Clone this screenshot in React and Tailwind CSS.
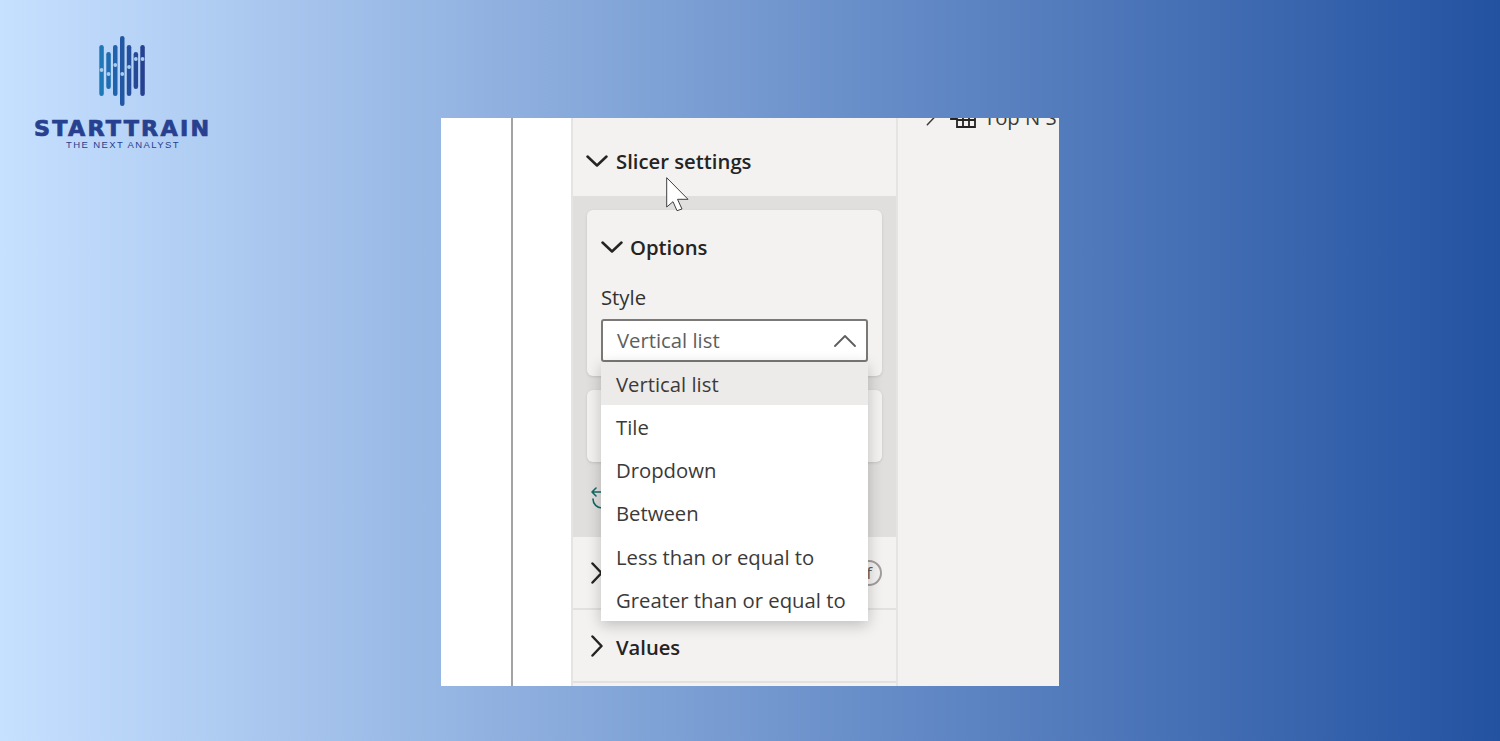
import React from "react";

const uiFont = "font-['Open_Sans','Noto_Sans',sans-serif]";

function Chevron({ dir = "down", className = "", width = 2.5 }) {
  const conf = {
    down: ["0 0 22 12", "M1.5 1.5 L11 10.5 L20.5 1.5"],
    up: ["0 0 22 12", "M1 11 L11 1 L21 11"],
    right: ["0 0 12 22", "M1.5 1.5 L10.5 11 L1.5 20.5"],
  }[dir];
  return (
    <svg viewBox={conf[0]} className={className} fill="none" stroke="currentColor" strokeWidth={width} strokeLinecap="round" strokeLinejoin="round">
      <path d={conf[1]} />
    </svg>
  );
}

function Logo() {
  const bars = [
    { x: 99.3, y: 45, h: 51, c: "#1f78b8", dot: 70 },
    { x: 106.3, y: 52, h: 37, c: "#1f6cb0", dot: 74 },
    { x: 113, y: 45, h: 51, c: "#2062ab", dot: 65 },
    { x: 120, y: 36, h: 70, c: "#2258a3", dot: 74 },
    { x: 126.8, y: 45, h: 51, c: "#244f9c", dot: 67 },
    { x: 133.6, y: 52, h: 37, c: "#264896", dot: 59 },
    { x: 140.3, y: 45, h: 51, c: "#274191", dot: 59 },
  ];
  return (
    <div className="mt-[36px] flex w-[176px] flex-col items-center">
      <svg viewBox="96 36 52 70" className="h-[70px] w-[52px]">
        {bars.map((b) => (
          <g key={b.x}>
            <rect x={b.x} y={b.y} width="4.5" height={b.h} rx="2.25" fill={b.c} />
            <circle cx={b.x + 2.25} cy={b.dot} r="1.9" fill="#a9cdf0" />
          </g>
        ))}
      </svg>
      <div className="ml-[2px] mt-[14px] origin-center scale-x-[1.06] whitespace-nowrap text-[21px] leading-[18px] font-bold tracking-[2.1px] text-[#27408f] [-webkit-text-stroke:0.7px_#27408f] font-['DejaVu_Sans',sans-serif]">
        STARTTRAIN
      </div>
      <div className="ml-[2px] mt-[2px] whitespace-nowrap text-[9.5px] leading-[10px] tracking-[1.4px] text-[#27408f] font-['Liberation_Sans',sans-serif]">
        THE NEXT ANALYST
      </div>
    </div>
  );
}

function Cursor() {
  return (
    <svg viewBox="0 0 24 35" className="absolute left-[224px] top-[59px] h-[35px] w-[24px]">
      <path d="M1.7 .7 L1.7 30 L8 24.7 L12 33.7 L17 32 L12.5 22.3 L23 22.3 Z" fill="#ffffff" stroke="#3f3f3f" strokeWidth="1" />
    </svg>
  );
}

function DropdownMenu() {
  const items = ["Vertical list", "Tile", "Dropdown", "Between", "Less than or equal to", "Greater than or equal to"];
  return (
    <div className="absolute left-[160px] top-[244px] w-[267px] bg-white shadow-[0_4px_14px_rgba(0,0,0,0.22)]">
      {items.map((t, i) => (
        <div
          key={t}
          className={`flex h-[43.2px] items-center whitespace-nowrap pl-[15px] pt-[1px] text-[20.3px] text-[#3b3a39] ${i === 0 ? "bg-[#edebe9]" : "bg-white"}`}
        >
          {t}
        </div>
      ))}
    </div>
  );
}

function Row({ label, children }) {
  return (
    <div className="flex h-[73px] items-center border-b-2 border-[#e3e1df] pl-[18px]">
      <Chevron dir="right" className="h-[22px] w-[12px] text-[#252423]" />
      <span className="ml-[13px] pt-[3px] text-[20.2px] font-semibold text-[#252423]">{label}</span>
      {children}
    </div>
  );
}

export default function App() {
  return (
    <div className="flex h-[741px] w-full items-start overflow-hidden bg-[linear-gradient(90deg,#c6e0ff_0%,#2352a1_100%)] pl-[34px]">
      <Logo />
      <div className={`relative ml-[231px] mt-[118px] flex h-[568px] w-[618px] overflow-hidden bg-white ${uiFont}`}>
        <div className="w-[70px] bg-white" />
        <div className="w-[2px] bg-[#a3a3a3]" />
        <div className="w-[58px] bg-white" />
        <div className="flex w-[327px] flex-col border-x-2 border-[#e6e4e2] bg-[#f3f2f1]">
          <div className="flex h-[78px] items-center pl-[13px] pt-[8px]">
            <Chevron dir="down" className="h-[12px] w-[22px] text-[#252423]" />
            <span className="ml-[8px] text-[20.3px] font-semibold text-[#252423]">Slicer settings</span>
          </div>
          <div className="flex h-[341px] flex-col bg-[#e1dfdd] px-[14px] pt-[14px]">
            <div className="h-[166px] rounded-[6px] bg-[#f3f2f1] px-[14px] pt-[21px] shadow-[0_1px_3px_rgba(0,0,0,0.12)]">
              <div className="flex items-center">
                <Chevron dir="down" className="h-[12px] w-[22px] text-[#252423]" />
                <span className="ml-[7px] text-[20.3px] font-semibold leading-[32px] text-[#252423]">Options</span>
              </div>
              <div className="mt-[20px] text-[20.3px] leading-[28px] text-[#323130]">Style</div>
              <div className="mt-[8px] flex h-[43px] items-center justify-between rounded-[3px] border-2 border-[#7b7977] bg-white pl-[14px] pr-[10px]">
                <span className="text-[20.3px] text-[#605e5c]">Vertical list</span>
                <Chevron dir="up" width={1.8} className="h-[12px] w-[22px] text-[#605e5c]" />
              </div>
            </div>
            <div className="mt-[14px] h-[72px] rounded-[6px] bg-[#f3f2f1] shadow-[0_1px_3px_rgba(0,0,0,0.12)]" />
            <svg viewBox="0 0 24 24" className="ml-[2px] mt-[23px] h-[26px] w-[24px] text-[#0f6b66]" fill="none" stroke="currentColor" strokeWidth="1.6" strokeLinecap="round" strokeLinejoin="round">
              <path d="M14 6 H3 M7 2 L3 6 L7 10" />
              <path d="M4 13 A 9 9 0 0 0 13 22" />
            </svg>
          </div>
          <Row label="">
            <span className="ml-auto mr-[14px] flex h-[26px] w-[26px] items-center justify-center rounded-full border-2 border-[#a19f9d] text-[17px] text-[#605e5c]">
              f
            </span>
          </Row>
          <Row label="Values" />
        </div>
        <div className="relative flex-1 bg-[#f3f2f1]">
          <div className="absolute -top-[14px] left-[28px] flex items-center whitespace-nowrap text-[20.3px] text-[#3b3a39]">
            <Chevron dir="right" width={1.8} className="h-[18px] w-[10px]" />
            <svg viewBox="0 0 26 22" className="ml-[14px] h-[22px] w-[26px]" fill="none" stroke="#252423" strokeWidth="1.8">
              <path d="M1 2 H12 M1 2 V13 H7 M7 7 H25 V21 H7 Z M7 14 H25 M13 7 V21 M19 7 V21" />
            </svg>
            <span className="ml-[8px] leading-[26px]">Top N S</span>
          </div>
        </div>
        <Cursor />
        <DropdownMenu />
      </div>
    </div>
  );
}
